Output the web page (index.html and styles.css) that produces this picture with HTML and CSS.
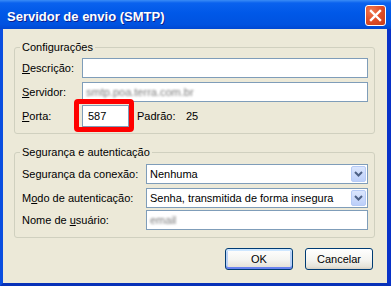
FILE: index.html
```html
<!DOCTYPE html>
<html lang="pt-BR">
<head>
<meta charset="UTF-8" />
<title>Servidor de envio (SMTP)</title>
<link rel="stylesheet" href="styles.css">
</head>
<body>

<div class="window">
  <!-- caption -->
  <div class="titlebar">
    <span class="title">Servidor de envio (SMTP)</span>
    <button class="close" aria-label="Fechar">
      <svg width="13" height="13" viewBox="0 0 13 13">
        <path d="M2 2 L11 11 M11 2 L2 11" stroke="#fff" stroke-width="2.4" stroke-linecap="square"/>
      </svg>
    </button>
  </div>

  <div class="client">
    <fieldset class="group group-config">
      <legend>Configurações</legend>
      <div class="row">
        <label class="lbl"><u>D</u>escrição:</label>
        <div class="field"></div>
      </div>
      <div class="row row-server">
        <label class="lbl"><u>S</u>ervidor:</label>
        <div class="field"><span class="blur">smtp.poa.terra.com.br</span></div>
      </div>
      <div class="row row-port">
        <label class="lbl"><u>P</u>orta:</label>
        <div class="port-wrap">
          <div class="field field-port">587</div>
        </div>
        <span class="default-lbl">Padrão:</span>
        <span>25</span>
      </div>
    </fieldset>

    <fieldset class="group group-sec">
      <legend>Segurança e autenticação</legend>
      <div class="row">
        <label class="lbl">Se<u>g</u>urança da conexão:</label>
        <div class="field select">
          <span class="sel-text">Nenhuma</span>
          <span class="drop"><svg width="9" height="6" viewBox="0 0 9 6"><path d="M1 1 L4.5 4.5 L8 1" fill="none" stroke="#4d6185" stroke-width="2"/></svg></span>
        </div>
      </div>
      <div class="row row-auth">
        <label class="lbl">M<u>o</u>do de autenticação:</label>
        <div class="field select">
          <span class="sel-text">Senha, transmitida de forma insegura</span>
          <span class="drop"><svg width="9" height="6" viewBox="0 0 9 6"><path d="M1 1 L4.5 4.5 L8 1" fill="none" stroke="#4d6185" stroke-width="2"/></svg></span>
        </div>
      </div>
      <div class="row row-user">
        <label class="lbl">Nome de <u>u</u>suário:</label>
        <div class="field"><span class="blur">email</span></div>
      </div>
    </fieldset>

    <div class="actions">
      <button class="btn default">OK</button>
      <button class="btn">Cancelar</button>
    </div>
  </div>
</div>

</body>
</html>
```

FILE: styles.css
```css
:root{
  --face:      #ece9d8;
  --frame:     #0842d6;
  --caption:   #0055e5;
  --group:     #d0d0bf;
  --field-bd:  #7f9db9;
  --btn-bd:    #003c74;
  --txt:       #000000;
  --mark:      #ff0000;
  font-family: "Liberation Sans", Arial, sans-serif;
  font-size: 11px;
}

*{box-sizing:border-box;margin:0;padding:0}

body{background:var(--face)}

/* window frame */
.window{
  width:391px;height:286px;
  display:flex;flex-direction:column;
  background:var(--frame);
  border-left:3px solid #0a4ee0;
  border-right:4px solid #0832c8;
  border-bottom:3px solid #0731b8;
}

/* caption bar */
.titlebar{
  height:29px;flex:none;
  margin:0 -4px 0 -3px;
  padding:3px 5px 0 7px;
  display:flex;justify-content:space-between;align-items:flex-start;
  background:linear-gradient(#3a8cf6 0,#0a62ee 3px,#0058e8 45%,#0052e0 85%,#0047d2 100%);
}
.title{
  font-size:13px;font-weight:bold;line-height:27px;
  color:#fff;text-shadow:1px 1px #0c1f8f;
}
.close{
  width:21px;height:21px;margin-top:2px;
  display:flex;align-items:center;justify-content:center;
  border:1px solid #fff;border-radius:3px;
  background:radial-gradient(circle at 30% 25%,#f07a52 0,#e2502a 45%,#c63b17 100%);
}

/* dialog body */
.client{
  flex:1;
  background:var(--face);
  padding:12px 12px 0 11px;
  color:var(--txt);
}

.group{
  border:1px solid var(--group);
  border-radius:3px;
  padding:4px 6px 6px 7px;
  min-inline-size:0;
}
.group legend{
  line-height:13px;
  padding:0 2px;margin-left:-2px;
}
.group-sec{margin-top:12px;padding-top:5px;padding-bottom:7px}

.row{display:flex;align-items:center;height:20px}
.row-server{margin-top:4px}
.row-port{margin-top:3px;height:22px}
.row-auth{margin-top:4px}
.row-user{margin-top:2px}

.lbl{flex:none;width:60px;line-height:13px}
.group-sec .lbl{width:124px}
u{text-decoration:underline;text-underline-offset:1px}

/* edit boxes */
.field{
  flex:1;height:20px;
  border:1px solid var(--field-bd);
  background:#fff;
  padding:0 3px;
  display:flex;align-items:center;
  white-space:nowrap;overflow:hidden;
}
.blur{color:#7c7c7c;filter:blur(1.3px)}

.port-wrap{position:relative;flex:none;margin-right:8px}
.field-port{width:47px;height:22px;padding-left:5px}
/* red highlight drawn over the port box */
.port-wrap::after{
  content:"";position:absolute;
  top:-6px;left:-8px;right:-5px;bottom:-5px;
  border:5px solid var(--mark);border-radius:4px;
  pointer-events:none;
}
.default-lbl{width:49px}

/* combo boxes */
.select{padding-right:1px;justify-content:space-between}
.drop{
  width:15px;height:16px;flex:none;
  display:flex;align-items:center;justify-content:center;
  border:1px solid #b6cbf6;border-radius:2px;
  background:linear-gradient(#dbe6fd,#bccff9);
}

/* button row */
.actions{
  display:flex;justify-content:flex-end;gap:12px;
  margin-top:10px;padding-right:2px;
}
.btn{
  width:68px;height:22px;
  font:inherit;color:var(--txt);
  border:1px solid var(--btn-bd);border-radius:3px;
  background:linear-gradient(#ffffff 0,#f4f4f0 55%,#e6e3d9 88%,#d6d0c5 100%);
}
.btn.default{
  box-shadow:inset 0 2px #cee7ff,inset 0 -2px #6982ee,inset 2px 0 #b9d1f6,inset -2px 0 #b9d1f6;
}
```
